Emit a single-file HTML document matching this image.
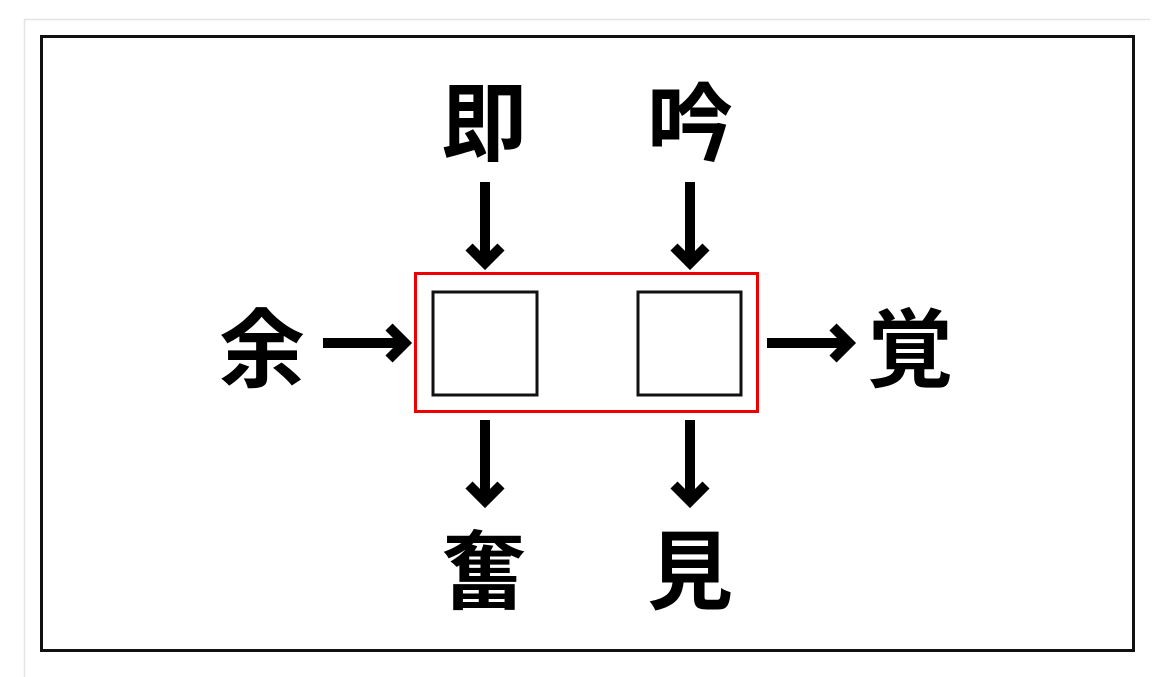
<!DOCTYPE html>
<html><head><meta charset="utf-8"><style>
html,body{margin:0;padding:0;background:#fff;width:1163px;height:677px;overflow:hidden}
svg{display:block}
text{font-family:"Liberation Sans","Noto Sans CJK JP",sans-serif;font-weight:bold;font-size:86px;fill:#000}
</style></head><body>
<svg width="1163" height="677" viewBox="0 0 1163 677">
<path d="M24.5 700V19.5H1150" fill="none" stroke="#e3e3e3" stroke-width="1.5"/>
<rect x="41.5" y="36.5" width="1092" height="614" fill="none" stroke="#111" stroke-width="3"/>
<rect x="415.5" y="273.5" width="342" height="138" fill="none" stroke="#e00" stroke-width="3"/>
<rect x="433" y="292" width="104" height="103" fill="none" stroke="#111" stroke-width="3"/>
<rect x="638" y="292" width="103" height="103" fill="none" stroke="#111" stroke-width="3"/>
<text x="484" y="154" text-anchor="middle">即</text>
<text x="690" y="154" text-anchor="middle">吟</text>
<text x="262" y="380" text-anchor="middle">余</text>
<text x="910" y="380" text-anchor="middle">覚</text>
<text x="484" y="602" text-anchor="middle">奮</text>
<text x="690" y="602" text-anchor="middle">見</text>
<g stroke="#000" stroke-width="10" fill="none" stroke-linecap="butt" stroke-linejoin="miter">
<path d="M485 182V262M469 247L485 263L501 247"/>
<path d="M690 182V262M674 247L690 263L706 247"/>
<path d="M485 420V500M469 485L485 501L501 485"/>
<path d="M690 420V500M674 485L690 501L706 485"/>
<path d="M323 343H404M389 327L405 343L389 359"/>
<path d="M767 343H848M833 327L849 343L833 359"/>
</g>
</svg>
</body></html>
